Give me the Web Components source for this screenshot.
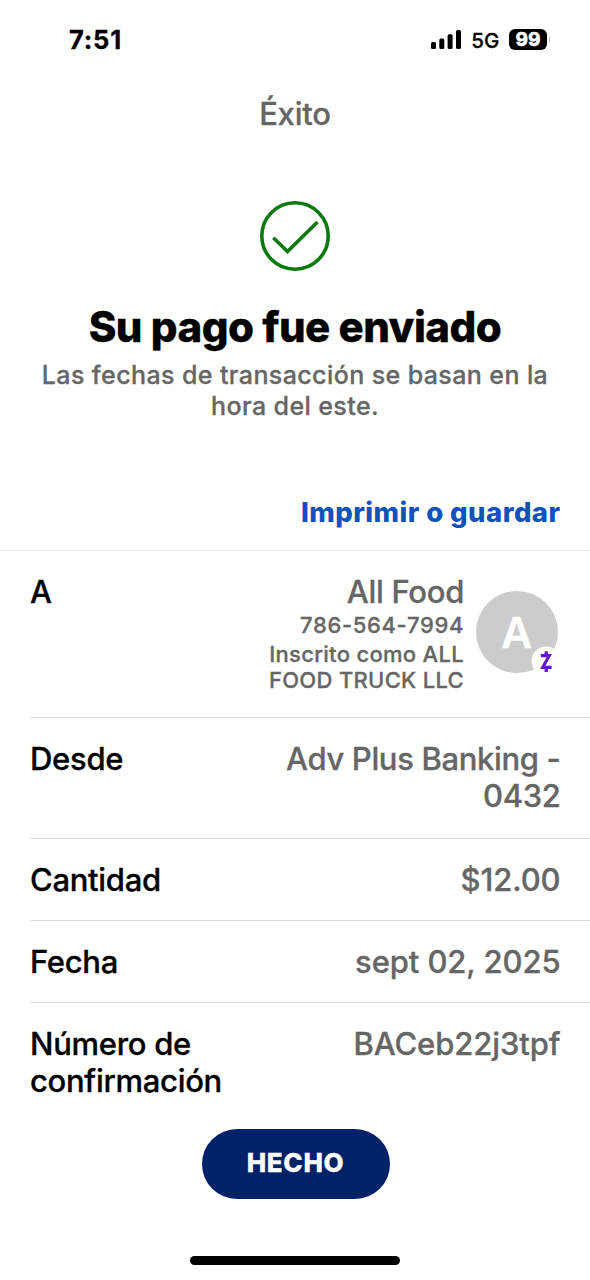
<!DOCTYPE html>
<html lang="es">
<head>
<meta charset="utf-8">
<title>Éxito</title>
<style>
  body {
    margin: 0;
    background: #fff;
    color: #000;
    font-family: Inter, "Liberation Sans", sans-serif;
    font-weight: 500;
    -webkit-text-stroke: 0.3px currentColor;
  }
</style>
</head>
<body>
<payment-screen>
  <status-bar slot="status" time="7:51" network="5G" battery="99"></status-bar>
  <success-header slot="header" screen="Éxito">
    <span slot="title">Su pago fue enviado</span>
    <span slot="note">Las fechas de transacción se basan en la hora del este.</span>
  </success-header>
  <print-link slot="header">Imprimir o guardar</print-link>

  <detail-row style="--height: 166px">
    <span slot="label">A</span>
    <payee-card initial="A">
      <span slot="name">All Food</span>
      <span slot="phone">786-564-7994</span>
      <span slot="enrolled">Inscrito como ALL FOOD TRUCK LLC</span>
    </payee-card>
  </detail-row>
  <detail-row style="--height: 120px; --spacing: -0.35px">
    <span slot="label">Desde</span>Adv Plus Banking - 0432
  </detail-row>
  <detail-row>
    <span slot="label">Cantidad</span>$12.00
  </detail-row>
  <detail-row>
    <span slot="label">Fecha</span>sept 02, 2025
  </detail-row>
  <detail-row last style="--height: 126px">
    <span slot="label">Número de confirmación</span>BACeb22j3tpf
  </detail-row>

  <pill-button slot="footer">HECHO</pill-button>
</payment-screen>

<script>
class PaymentScreen extends HTMLElement {
  constructor() {
    super();
    this.attachShadow({ mode: "open" });
    this.shadowRoot.innerHTML = `
      <style>
        :host {
          display: flex;
          flex-direction: column;
          width: 590px;
          height: 1280px;
          overflow: hidden;
        }
        main {
          border-top: 1px solid #e4e4e4;
        }
        footer {
          display: flex;
          flex: 1;
          flex-direction: column;
          align-items: center;
          justify-content: space-between;
          padding-bottom: 15px;
        }
        .home {
          width: 210px;
          height: 9px;
          border-radius: 5px;
          background: #000;
        }
      </style>
      <slot name="status"></slot>
      <slot name="header"></slot>
      <main><slot></slot></main>
      <footer>
        <slot name="footer"></slot>
        <div class="home"></div>
      </footer>
    `;
  }
}

class StatusBar extends HTMLElement {
  constructor() {
    super();
    this.attachShadow({ mode: "open" });
    this.shadowRoot.innerHTML = `
      <style>
        :host {
          display: flex;
          justify-content: space-between;
          align-items: center;
          height: 79px;
          padding: 0 40px 0 69px;
        }
        .time {
          font-size: 25.5px;
          font-weight: 700;
          letter-spacing: 0.8px;
          line-height: 30px;
        }
        .right {
          display: flex;
          align-items: center;
        }
        .network {
          margin: 2px 9.5px 0 10px;
          font-size: 20.5px;
          letter-spacing: 0.1px;
          line-height: 24px;
        }
        .battery {
          width: 38px;
          height: 21px;
          border-radius: 6px;
          background: #000;
          color: #fff;
          font-size: 19px;
          font-weight: 800;
          line-height: 21px;
          text-align: center;
        }
        .nub {
          width: 1px;
          height: 6px;
          margin-left: 2px;
          border-radius: 0 2px 2px 0;
          background: #bbb;
        }
      </style>
      <span class="time"></span>
      <div class="right">
        <svg width="30" height="19" viewBox="0 0 30 19">
          <rect x="0" y="12" width="5" height="7" rx="1.5"/>
          <rect x="8.3" y="8.5" width="5" height="10.5" rx="1.5"/>
          <rect x="16.6" y="4.3" width="5" height="14.7" rx="1.5"/>
          <rect x="25" y="0" width="5" height="19" rx="1.5"/>
        </svg>
        <span class="network"></span>
        <div class="battery"></div>
        <div class="nub"></div>
      </div>
    `;
  }

  connectedCallback() {
    for (const name of ["time", "network", "battery"]) {
      this.shadowRoot.querySelector("." + name).textContent = this.getAttribute(name);
    }
  }
}

class SuccessHeader extends HTMLElement {
  constructor() {
    super();
    this.attachShadow({ mode: "open" });
    this.shadowRoot.innerHTML = `
      <style>
        :host {
          display: flex;
          flex-direction: column;
          align-items: center;
          color: #666;
          text-align: center;
        }
        .screen {
          margin-top: 16px;
          font-size: 31px;
          letter-spacing: -0.2px;
          line-height: 37px;
        }
        svg {
          margin: 68px 0 29px;
        }
        h1 {
          margin: 0;
          color: #000;
          font-size: 42px;
          font-weight: 800;
          letter-spacing: -0.5px;
          line-height: 52px;
        }
        p {
          width: 530px;
          margin: 7px 0 0;
          font-size: 25px;
          letter-spacing: 0.4px;
          line-height: 31px;
        }
      </style>
      <span class="screen"></span>
      <svg width="72" height="72" viewBox="0 0 72 72" fill="none" stroke="#0a7a0f" stroke-width="3.6">
        <circle cx="36" cy="36" r="33.2"/>
        <path d="M14.3 37.7 28.5 51.5 58.5 22"/>
      </svg>
      <h1><slot name="title"></slot></h1>
      <p><slot name="note"></slot></p>
    `;
  }

  connectedCallback() {
    this.shadowRoot.querySelector(".screen").textContent = this.getAttribute("screen");
  }
}

class PrintLink extends HTMLElement {
  constructor() {
    super();
    this.attachShadow({ mode: "open" });
    this.shadowRoot.innerHTML = `
      <style>
        :host {
          display: block;
          padding: 73px 29.5px 21px;
          color: #0f52ba;
          font-size: 27.5px;
          font-weight: 800;
          letter-spacing: 0.45px;
          line-height: 34px;
          text-align: right;
          -webkit-text-stroke: 0;
        }
      </style>
      <slot></slot>
    `;
  }
}

class DetailRow extends HTMLElement {
  constructor() {
    super();
    this.attachShadow({ mode: "open" });
    this.shadowRoot.innerHTML = `
      <style>
        :host {
          display: flex;
          justify-content: space-between;
          box-sizing: content-box;
          height: var(--height, 81px);
          margin-left: 30px;
          padding-right: 29.5px;
          border-bottom: 1px solid #dedede;
          font-size: 31px;
          letter-spacing: -0.3px;
          line-height: 37px;
        }
        :host([last]) {
          border-bottom: 0;
        }
        .label {
          width: 215px;
          padding-top: 22px;
        }
        .value {
          width: 300px;
          padding-top: 22px;
          color: #666;
          letter-spacing: var(--spacing, -0.1px);
          text-align: right;
        }
      </style>
      <div class="label"><slot name="label"></slot></div>
      <div class="value"><slot></slot></div>
    `;
  }
}

class PayeeCard extends HTMLElement {
  constructor() {
    super();
    this.attachShadow({ mode: "open" });
    this.shadowRoot.innerHTML = `
      <style>
        :host {
          display: flex;
          justify-content: flex-end;
          gap: 12px;
          margin-right: 2.5px;
        }
        .text {
          display: flex;
          flex-direction: column;
          width: 210px;
          font-size: 22px;
          letter-spacing: 0.3px;
          line-height: 26px;
        }
        .name {
          font-size: 31px;
          letter-spacing: -0.3px;
          line-height: 37px;
        }
        .phone {
          margin: 2px 0 3px;
          letter-spacing: 0.65px;
        }
        .avatar {
          position: relative;
          flex: none;
          width: 82px;
          height: 82px;
          margin-top: 18px;
          border-radius: 50%;
          background: #ccc;
          color: #fff;
          font-size: 43px;
          font-weight: 600;
          line-height: 83px;
          text-align: center;
        }
        .initial {
          margin-right: 1px;
        }
        .badge {
          position: absolute;
          left: 55px;
          top: 55px;
        }
      </style>
      <div class="text">
        <div class="name"><slot name="name"></slot></div>
        <div class="phone"><slot name="phone"></slot></div>
        <div><slot name="enrolled"></slot></div>
      </div>
      <div class="avatar">
        <span class="initial"></span>
        <svg class="badge" width="30" height="30" viewBox="0 0 30 30">
          <circle cx="15" cy="15" r="14.5" fill="#fff"/>
          <path d="M9.8 9.7H18.2L11.8 21.3H20.6M15.2 5.2V9.5M15.2 21.5V26" fill="none" stroke="#6218c4" stroke-width="3.2"/>
        </svg>
      </div>
    `;
  }

  connectedCallback() {
    this.shadowRoot.querySelector(".initial").textContent = this.getAttribute("initial");
  }
}

class PillButton extends HTMLElement {
  constructor() {
    super();
    this.attachShadow({ mode: "open" });
    this.shadowRoot.innerHTML = `
      <style>
        button {
          display: block;
          width: 188px;
          height: 70px;
          margin-left: 1px;
          padding: 0 0 2px;
          border: 0;
          border-radius: 35px;
          background: #012169;
          color: #fff;
          font: 800 26px/68px Inter, "Liberation Sans", sans-serif;
          letter-spacing: 0.7px;
        }
      </style>
      <button><slot></slot></button>
    `;
  }
}

window.customElements.define("payment-screen", PaymentScreen);
window.customElements.define("status-bar", StatusBar);
window.customElements.define("success-header", SuccessHeader);
window.customElements.define("print-link", PrintLink);
window.customElements.define("detail-row", DetailRow);
window.customElements.define("payee-card", PayeeCard);
window.customElements.define("pill-button", PillButton);
</script>
</body>
</html>
